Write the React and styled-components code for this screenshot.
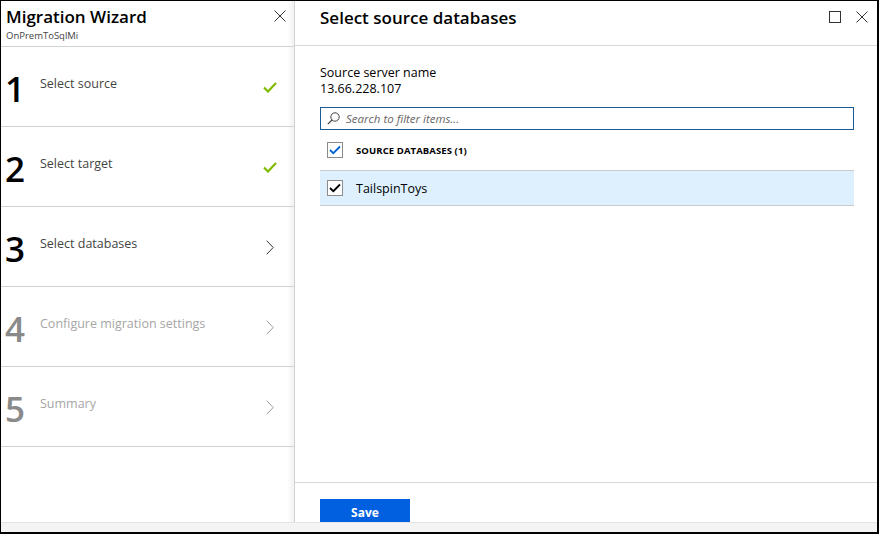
import { createGlobalStyle, styled } from 'styled-components';

const GlobalStyle = createGlobalStyle`
  html, body {
    margin: 0;
    padding: 0;
    background: #fff;
  }
  body {
    font-family: "Segoe UI", "Open Sans", sans-serif;
    color: #000;
  }
`;

const Frame = styled.div`
  width: 879px;
  height: 534px;
  box-sizing: border-box;
  border-style: solid;
  border-color: #000;
  border-width: 1px 2px 2px 1px;
  display: flex;
  flex-direction: column;
  overflow: hidden;
`;

const Blades = styled.div`
  flex: 1;
  display: flex;
  min-height: 0;
  overflow: hidden;
`;

const ScrollStrip = styled.div`
  height: 10px;
  flex-shrink: 0;
  background: #f4f4f4;
  border-top: 1px solid #e4e4e4;
  box-sizing: border-box;
`;

const LeftBlade = styled.aside`
  width: 294px;
  flex-shrink: 0;
  box-sizing: border-box;
  border-right: 1px solid #d2d2d2;
  background: linear-gradient(to right, #fff 0, #fff 286px, #f2f2f2 293px);
  display: flex;
  flex-direction: column;
`;

const LeftHeader = styled.header`
  height: 46px;
  box-sizing: border-box;
  border-bottom: 1px solid #d2d2d2;
  padding: 4px 8px 0 5px;
  display: flex;
  justify-content: space-between;
  align-items: flex-start;
`;

const WizardTitle = styled.h1`
  margin: 0;
  font-size: 17px;
  font-weight: 600;
  line-height: 24px;
  color: #000;
`;

const WizardSub = styled.div`
  font-size: 9.5px;
  line-height: 12px;
  color: #444;
  margin-top: 1px;
`;

const IconButton = styled.button`
  border: none;
  background: none;
  padding: 0;
  margin: 0;
  display: flex;
  align-items: center;
  justify-content: center;
  cursor: pointer;
`;

const StepRow = styled.div`
  height: 80px;
  box-sizing: border-box;
  border-bottom: 1px solid #d2d2d2;
  display: flex;
  align-items: flex-start;
  padding: 24px 17px 0 4px;
`;

const StepNumber = styled.div`
  width: 35px;
  font-size: 35px;
  font-weight: 600;
  line-height: 36px;
  color: ${(p) => (p.$disabled ? '#8a8a8a' : '#000')};
`;

const StepLabel = styled.div`
  flex: 1;
  font-size: 12.5px;
  line-height: 20px;
  margin-top: 3px;
  color: ${(p) => (p.$disabled ? '#a6a6a6' : '#444')};
`;

const StepIcon = styled.div`
  width: 14px;
  height: 18px;
  margin-top: 7px;
  display: flex;
  align-items: center;
  justify-content: center;
`;

const RightBlade = styled.main`
  flex: 1;
  display: flex;
  flex-direction: column;
  min-width: 0;
`;

const RightHeader = styled.header`
  height: 45px;
  box-sizing: border-box;
  border-bottom: 1px solid #d9d9d9;
  padding: 4px 9px 0 25px;
  display: flex;
  align-items: flex-start;
  justify-content: space-between;
`;

const BladeTitle = styled.h2`
  margin: 0;
  font-size: 17px;
  font-weight: 600;
  line-height: 26px;
`;

const HeaderIcons = styled.div`
  display: flex;
  gap: 15px;
  padding-top: 6px;
`;

const Body = styled.section`
  flex: 1;
  padding: 19px 23px 0 25px;
`;

const FieldLabel = styled.div`
  font-size: 12.5px;
  line-height: 16px;
  color: #000;
`;

const FieldValue = styled.div`
  font-size: 12.5px;
  line-height: 16px;
  color: #000;
`;

const SearchBox = styled.label`
  margin-top: 10px;
  height: 23px;
  box-sizing: border-box;
  border: 1px solid #1a5a96;
  display: flex;
  align-items: center;
  gap: 6px;
  padding-left: 6px;
`;

const SearchInput = styled.input`
  flex: 1;
  border: none;
  outline: none;
  font-family: inherit;
  font-size: 11.5px;
  font-style: italic;
  color: #333;
  padding: 0;
  background: transparent;
  &::placeholder {
    color: #666;
  }
`;

const ListHeader = styled.div`
  height: 40px;
  display: flex;
  align-items: center;
  padding-left: 7px;
  gap: 13px;
  border-bottom: 1px solid #cccccc;
`;

const ColumnTitle = styled.div`
  font-size: 9.5px;
  font-weight: 700;
  color: #000;
  letter-spacing: 0.1px;
`;

const ListRow = styled.div`
  height: 35px;
  box-sizing: border-box;
  display: flex;
  align-items: center;
  padding-left: 7px;
  gap: 13px;
  background: ${(p) => (p.$selected ? '#def0fe' : '#fff')};
  border-bottom: 1px solid #cccccc;
`;

const RowText = styled.div`
  font-size: 12.5px;
  color: #000;
`;

const Box = styled.span`
  width: 16px;
  height: 16px;
  box-sizing: border-box;
  border: 1px solid #8a8a8a;
  background: #fff;
  display: flex;
  align-items: center;
  justify-content: center;
  flex-shrink: 0;
`;

const Footer = styled.footer`
  height: 40px;
  flex-shrink: 0;
  border-top: 1px solid #d9d9d9;
  padding: 16px 0 0 25px;
  box-sizing: border-box;
  overflow: hidden;
`;

const SaveButton = styled.button`
  width: 90px;
  height: 28px;
  border: none;
  background: #0060df;
  color: #fff;
  font-family: inherit;
  font-size: 12px;
  font-weight: 700;
  padding: 0 0 2px;
  cursor: pointer;
`;

const CloseIcon = ({ size = 12 }) => (
  <svg width={size} height={size} viewBox="0 0 12 12">
    <path d="M0.5 0.5 L11.5 11.5 M11.5 0.5 L0.5 11.5" stroke="#333" strokeWidth="1" fill="none" />
  </svg>
);

const MaxIcon = () => (
  <svg width="12" height="12" viewBox="0 0 12 12">
    <rect x="0.5" y="0.5" width="11" height="11" stroke="#333" strokeWidth="1" fill="none" />
  </svg>
);

const GreenCheck = () => (
  <svg width="14" height="11" viewBox="0 0 14 11">
    <path d="M1 5.5 L5 9.5 L13 1" stroke="#7fba00" strokeWidth="2.2" fill="none" />
  </svg>
);

const Chevron = ({ color }) => (
  <svg width="8" height="15" viewBox="0 0 8 15">
    <path d="M0.7 0.7 L7.2 7.5 L0.7 14.3" stroke={color} strokeWidth="1" fill="none" />
  </svg>
);

const SearchIcon = () => (
  <svg width="13" height="13" viewBox="0 0 13 13">
    <circle cx="8" cy="5" r="4.2" stroke="#444" strokeWidth="1" fill="none" />
    <path d="M5 8 L0.8 12.2" stroke="#444" strokeWidth="1.2" fill="none" />
  </svg>
);

const Tick = ({ color }) => (
  <svg width="12" height="10" viewBox="0 0 12 10">
    <path d="M1 5 L4.3 8.2 L11 1.5" stroke={color} strokeWidth="1.8" fill="none" />
  </svg>
);

const steps = [
  { n: 1, label: 'Select source', state: 'done' },
  { n: 2, label: 'Select target', state: 'done' },
  { n: 3, label: 'Select databases', state: 'active' },
  { n: 4, label: 'Configure migration settings', state: 'disabled' },
  { n: 5, label: 'Summary', state: 'disabled' },
];

const App = () => {
  return (
    <>
      <GlobalStyle />
      <Frame>
        <Blades>
          <LeftBlade>
            <LeftHeader>
              <div>
                <WizardTitle>Migration Wizard</WizardTitle>
                <WizardSub>OnPremToSqlMi</WizardSub>
              </div>
              <IconButton style={{ marginTop: 5 }}>
                <CloseIcon />
              </IconButton>
            </LeftHeader>
            {steps.map((s) => {
              const disabled = s.state === 'disabled';
              return (
                <StepRow key={s.n}>
                  <StepNumber $disabled={disabled}>{s.n}</StepNumber>
                  <StepLabel $disabled={disabled}>{s.label}</StepLabel>
                  <StepIcon>
                    {s.state === 'done' ? (
                      <GreenCheck />
                    ) : (
                      <Chevron color={disabled ? '#9a9a9a' : '#333'} />
                    )}
                  </StepIcon>
                </StepRow>
              );
            })}
          </LeftBlade>
          <RightBlade>
            <RightHeader>
              <BladeTitle>Select source databases</BladeTitle>
              <HeaderIcons>
                <IconButton>
                  <MaxIcon />
                </IconButton>
                <IconButton>
                  <CloseIcon />
                </IconButton>
              </HeaderIcons>
            </RightHeader>
            <Body>
              <FieldLabel>Source server name</FieldLabel>
              <FieldValue>13.66.228.107</FieldValue>
              <SearchBox>
                <SearchIcon />
                <SearchInput placeholder="Search to filter items..." />
              </SearchBox>
              <ListHeader>
                <Box>
                  <Tick color="#0063d1" />
                </Box>
                <ColumnTitle>SOURCE DATABASES (1)</ColumnTitle>
              </ListHeader>
              <ListRow $selected>
                <Box>
                  <Tick color="#000" />
                </Box>
                <RowText>TailspinToys</RowText>
              </ListRow>
            </Body>
            <Footer>
              <SaveButton>Save</SaveButton>
            </Footer>
          </RightBlade>
        </Blades>
        <ScrollStrip />
      </Frame>
    </>
  );
};

export default App;
